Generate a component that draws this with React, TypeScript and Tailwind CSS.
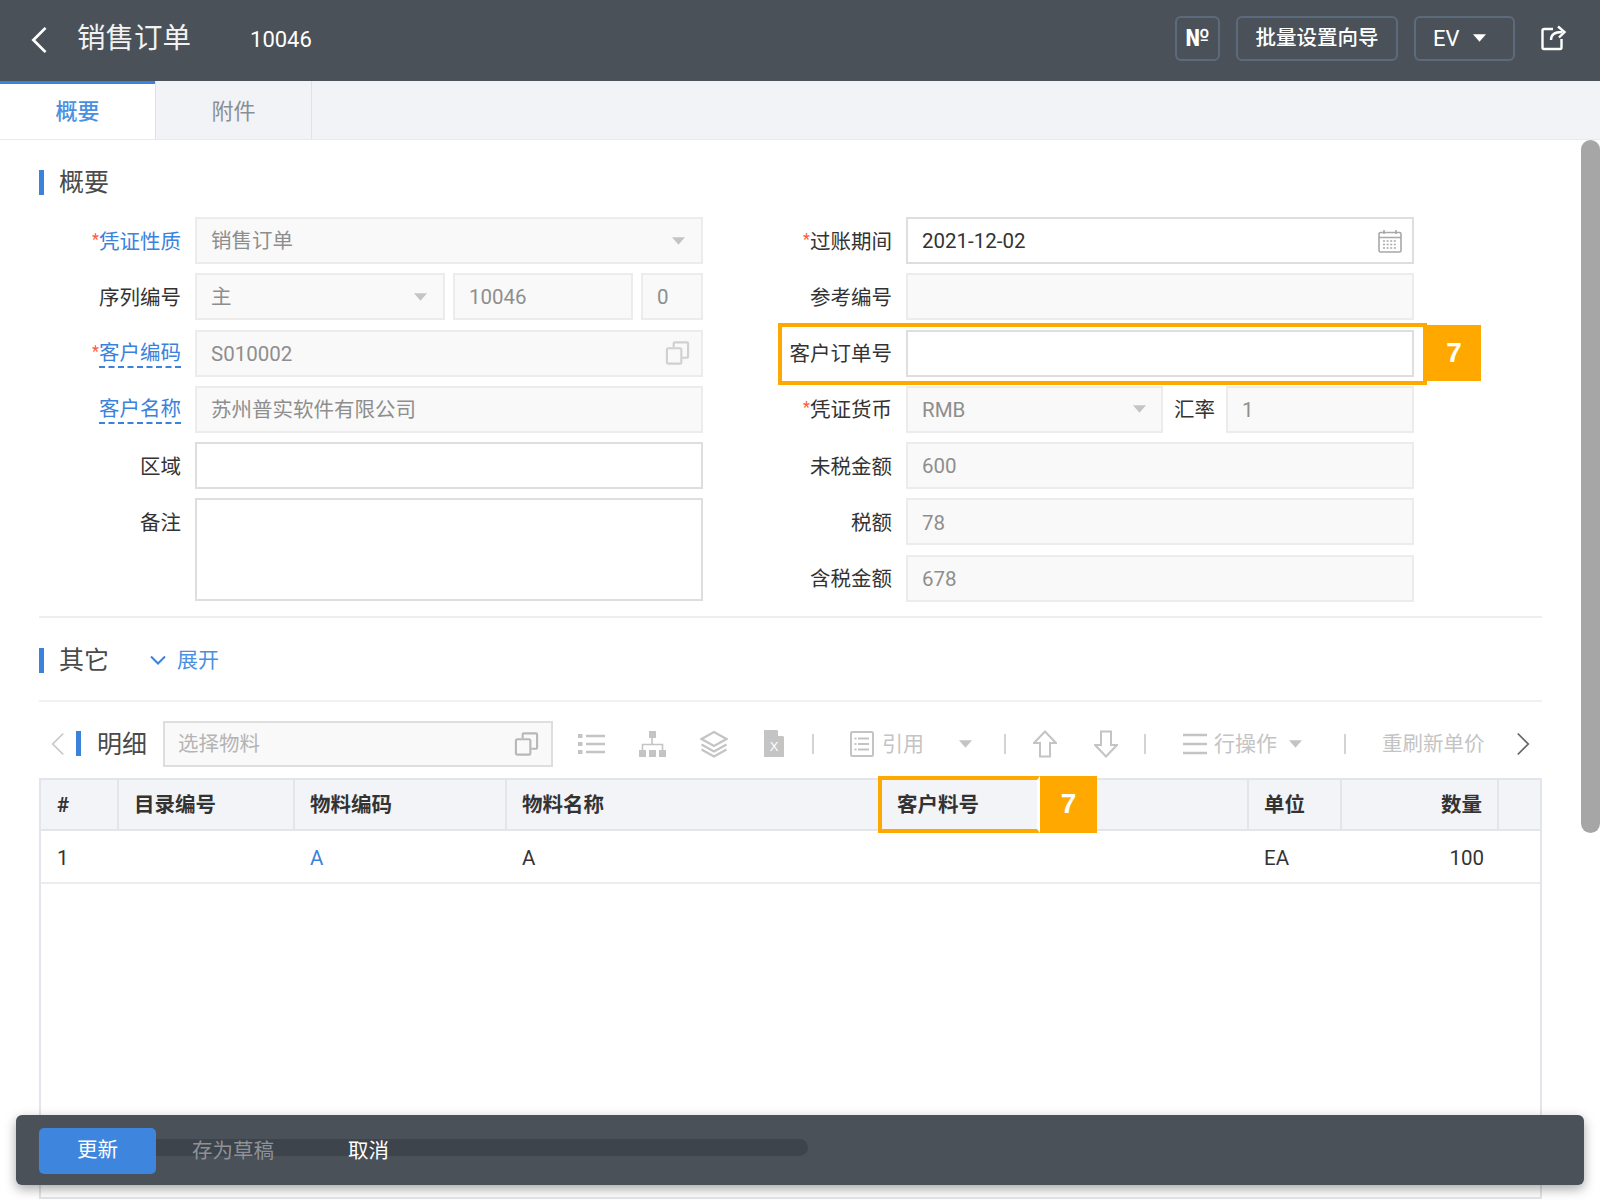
import React from "react";

const FONT = { fontFamily: '"Roboto", "Noto Sans CJK SC", sans-serif' };

function Caret({ className = "" }: { className?: string }) {
  return (
    <svg viewBox="0 0 12 7" className={`w-[13px] h-[8px] shrink-0 ${className}`} fill="currentColor">
      <path d="M0 0h12L6 7z" />
    </svg>
  );
}

function CopyIcon({ className = "" }: { className?: string }) {
  return (
    <svg viewBox="0 0 26 26" className={className} fill="none" stroke="currentColor" strokeWidth="2.2">
      <path d="M9 7V3a1 1 0 0 1 1-1h13a1 1 0 0 1 1 1v14a1 1 0 0 1-1 1h-5" />
      <rect x="2" y="8" width="15" height="16" rx="1.5" />
    </svg>
  );
}

function CalendarIcon() {
  return (
    <svg viewBox="0 0 24 24" className="w-[24px] h-[24px] text-[#a8a8a8] -mr-[4px]" fill="none" stroke="currentColor" strokeWidth="1.6">
      <rect x="1" y="3.5" width="22" height="19.5" rx="1.5" />
      <path d="M1 8.5h22M6 1v4M18 1v4" />
      <path d="M5 12h14M5 15.5h14M5 19h14" strokeDasharray="2 1.6" />
    </svg>
  );
}

function Field({ value = "", disabled = false, className = "", children }: { value?: string; disabled?: boolean; className?: string; children?: React.ReactNode }) {
  return (
    <div
      className={`flex items-center justify-between h-full min-w-0 border-2 px-[14px] text-[20.5px] ${
        disabled ? "bg-[#f9f9f9] border-[#ececec] text-[#8e8e8e]" : "bg-white border-[#dedede] text-[#333333]"
      } ${className}`}
    >
      <span className="pt-[2px]">{value}</span>
      {children}
    </div>
  );
}

function Label({ text, required, link }: { text: string; required?: boolean; link?: boolean }) {
  return (
    <div className="flex justify-end items-center h-[47px] pt-[2px] text-[20.5px] leading-[26px] text-[#333333]">
      {required && <span className="text-[#ff5a36] text-[16px] self-center -mt-1">*</span>}
      <span className={link === undefined ? "" : link ? "text-[#3b82dc] border-b-2 border-dashed border-[#3b82dc]" : "text-[#3b82dc]"}>{text}</span>
    </div>
  );
}

function Section({ title, children }: { title: string; children?: React.ReactNode }) {
  return (
    <div className="flex items-center h-[25px]">
      <div className="w-[5px] h-[25px] bg-[#3b82dc]" />
      <span className="ml-[15px] text-[25px] text-[#4a4a4a]">{title}</span>
      {children}
    </div>
  );
}

function Sep({ className = "" }: { className?: string }) {
  return <div className={`w-[2px] h-[20px] bg-[#d4d4d4] shrink-0 ${className}`} />;
}

const COLS = ["w-[78px]", "w-[176px]", "w-[212px]", "w-[372px]", "w-[162px]", "w-[208px]", "w-[93px]", "w-[157px]"];

export default function App() {
  return (
    <div style={FONT} className="relative w-[1600px] h-[1200px] overflow-hidden bg-white flex flex-col">
      {/* top bar */}
      <header className="h-[81px] shrink-0 bg-[#4a5159] flex items-center text-white">
        <svg viewBox="0 0 20 30" className="ml-[29px] -mt-[1px] w-[20px] h-[28px]" fill="none" stroke="currentColor" strokeWidth="3">
          <path d="M17 2 4 15l13 13" />
        </svg>
        <span className="ml-[28px] -mt-[3px] text-[28.5px] text-[#f2f2f2]">销售订单</span>
        <span className="ml-[59px] -mt-[3px] text-[22px]">10046</span>
        <div className="ml-auto -mt-[5px] flex items-center pr-[33px]">
          <button className="w-[45px] h-[45px] rounded-[6px] border-2 border-[#5c6b7c] text-[24px] leading-none font-bold">№</button>
          <button className="ml-[16px] w-[162px] h-[45px] rounded-[6px] border-2 border-[#5c6b7c] text-[20.5px] font-medium">批量设置向导</button>
          <button className="ml-[16px] w-[101px] h-[45px] rounded-[6px] border-2 border-[#5c6b7c] text-[22px] flex items-center pl-[17px] gap-[13px]">
            EV <Caret />
          </button>
          <svg viewBox="0 0 26 26" className="ml-[26px] w-[26px] h-[26px]" fill="none" stroke="currentColor" strokeWidth="2.4">
            <path d="M12 4H3a1.5 1.5 0 0 0-1.5 1.5v17A1.5 1.5 0 0 0 3 24h16a1.5 1.5 0 0 0 1.5-1.5V14" />
            <path d="M10 15c0-5 3.5-8 11-8" />
            <path d="M17 1.5 23.5 7 18 12.5" />
          </svg>
        </div>
      </header>

      {/* tabs */}
      <div className="h-[59px] shrink-0 bg-[#f1f3f7] flex border-b border-[#e8eaee]">
        <div className="w-[155px] bg-white border-t-[3px] border-[#3b82dc] flex items-center justify-center text-[22px] font-medium text-[#4a90e2]">概要</div>
        <div className="w-[157px] border-r border-l border-[#dfe2e8] flex items-center justify-center pt-[3px] text-[22px] text-[#8a8f96]">附件</div>
      </div>

      <main className="flex-1 min-h-0 flex flex-col pl-[39px] pr-[58px] pt-[30px]">
        <Section title="概要" />

        {/* form */}
        <div className="flex mt-[22px]">
          <div className="w-[664px] shrink-0 grid grid-cols-[142px_508px] gap-x-[14px] gap-y-[9.3px] auto-rows-[47px]">
            <Label text="凭证性质" required link={false} />
            <Field value="销售订单" disabled><Caret className="text-[#c4c4c4] mr-[2px]" /></Field>

            <Label text="序列编号" />
            <div className="flex gap-[8px] h-full">
              <Field value="主" disabled className="w-[250px]"><Caret className="text-[#c4c4c4] mr-[2px]" /></Field>
              <Field value="10046" disabled className="w-[180px]" />
              <Field value="0" disabled className="w-[62px]" />
            </div>

            <Label text="客户编码" required link />
            <Field value="S010002" disabled><CopyIcon className="w-[25px] h-[26px] text-[#d0d0d0] -mr-[3px]" /></Field>

            <Label text="客户名称" link />
            <Field value="苏州普实软件有限公司" disabled />

            <Label text="区域" />
            <Field />

            <div className="text-[20.5px] leading-[26px] text-[#333333] text-right pt-[12px]">备注</div>
            <div className="row-span-2 border-2 border-[#dedede] bg-white h-[103px]" />
          </div>

          <div className="w-[711px] shrink-0 grid grid-cols-[189px_508px] gap-x-[14px] gap-y-[9.3px] auto-rows-[47px]">
            <Label text="过账期间" required />
            <Field value="2021-12-02"><CalendarIcon /></Field>

            <Label text="参考编号" />
            <Field disabled />

            <div className="relative col-span-2 grid grid-cols-[189px_508px] gap-x-[14px] h-[47px]">
              <Label text="客户订单号" />
              <Field />
              {/* callout */}
              <div className="absolute left-[75px] -top-[7px] w-[649px] h-[62px] border-4 border-[#ffa800] pointer-events-none" />
              <div className="absolute left-[724px] -top-[5px] w-[54px] h-[56px] bg-[#ffa800] text-white text-[28px] font-bold flex items-center justify-center" style={{ fontFamily: '"Liberation Sans", sans-serif' }}>7</div>
            </div>

            <Label text="凭证货币" required />
            <div className="flex h-full">
              <Field value="RMB" disabled className="w-[257px]"><Caret className="text-[#c4c4c4] mr-[1px]" /></Field>
              <span className="w-[63px] flex items-center justify-center pt-[2px] text-[20.5px] text-[#333333]">汇率</span>
              <Field value="1" disabled className="flex-1" />
            </div>

            <Label text="未税金额" />
            <Field value="600" disabled />

            <Label text="税额" />
            <Field value="78" disabled />

            <Label text="含税金额" />
            <Field value="678" disabled />
          </div>
        </div>

        <div className="h-[2px] bg-[#eeeeee] mt-[14px]" />

        <div className="mt-[30px]">
          <Section title="其它">
            <svg viewBox="0 0 16 10" className="ml-[41px] w-[16px] h-[10px] text-[#3b82dc]" fill="none" stroke="currentColor" strokeWidth="2">
              <path d="M1 1.5 8 8.5l7-7" />
            </svg>
            <span className="ml-[11px] text-[21px] text-[#4a90e2]">展开</span>
          </Section>
        </div>

        <div className="h-[2px] bg-[#f1f1f1] mt-[27px]" />

        {/* toolbar */}
        <div className="flex items-center h-[46px] mt-[19px] text-[#c4c4c4] text-[21px]">
          <svg viewBox="0 0 16 26" className="ml-[12px] w-[14px] h-[26px] text-[#c8c8c8]" fill="none" stroke="currentColor" strokeWidth="2">
            <path d="M14 1 2 13l12 12" />
          </svg>
          <div className="ml-[11px] w-[5px] h-[25px] bg-[#3b82dc]" />
          <span className="ml-[16px] pt-[1px] text-[25px] text-[#4a4a4a]">明细</span>
          <div className="ml-[16px] w-[390px] h-[46px] flex items-center justify-between bg-[#f9f9f9] border-2 border-[#dedede] pl-[13px] pr-[12px] text-[20.5px] text-[#b4b4b4]">
            <span className="pt-[2px]">选择物料</span>
            <CopyIcon className="w-[25px] h-[26px] text-[#b8b8b8]" />
          </div>

          <svg viewBox="0 0 27 22" className="ml-[25px] w-[27px] h-[22px]" fill="none" stroke="currentColor" strokeWidth="2.4">
            <path d="M8 3h19M8 11h19M8 19h19" />
            <path d="M0 3h4.5M0 11h4.5M0 19h4.5" strokeWidth="4" />
          </svg>
          <svg viewBox="0 0 27 26" className="ml-[34px] w-[27px] h-[26px]" fill="currentColor">
            <rect x="10" y="0" width="7" height="7" />
            <rect x="0" y="19" width="7" height="7" />
            <rect x="10" y="19" width="7" height="7" />
            <rect x="20" y="19" width="7" height="7" />
            <path d="M13 7v6M3.5 19v-5.5h20V19" fill="none" stroke="currentColor" strokeWidth="1.6" />
          </svg>
          <svg viewBox="0 0 28 28" className="ml-[34px] w-[28px] h-[28px]" fill="none" stroke="currentColor" strokeWidth="2.2">
            <path d="m14 2 12.5 7L14 16 1.5 9z" />
            <path d="m1.5 14.5 12.5 7 12.5-7" />
            <path d="m1.5 19.5 12.5 7 12.5-7" />
          </svg>
          <svg viewBox="0 0 20 27" className="ml-[36px] w-[20px] h-[27px]">
            <path d="M0 0h13l7 7v20H0z" fill="currentColor" />
            <path d="M14 0.5 19.5 6H14z" fill="#ffffff" />
            <text x="10" y="21" textAnchor="middle" fontSize="13" fill="#ffffff" style={{ fontFamily: '"Liberation Sans", sans-serif' }}>X</text>
          </svg>
          <Sep className="ml-[28px]" />
          <svg viewBox="0 0 24 26" className="ml-[36px] w-[24px] h-[26px]" fill="none" stroke="currentColor" strokeWidth="2">
            <rect x="1" y="1" width="22" height="24" rx="1.5" />
            <path d="M8 7.5h11M8 13h11M8 18.5h11" />
            <path d="M4.5 7.5h2M4.5 13h2M4.5 18.5h2" />
          </svg>
          <span className="ml-[8px] pt-[2px]">引用</span>
          <Caret className="ml-[35px]" />
          <Sep className="ml-[32px]" />
          <svg viewBox="0 0 24 28" className="ml-[27px] w-[24px] h-[28px]" fill="none" stroke="currentColor" strokeWidth="2">
            <path d="M12 1.5 23 13h-6v13.5H7V13H1z" />
          </svg>
          <svg viewBox="0 0 24 28" className="ml-[37px] w-[24px] h-[28px]" fill="none" stroke="currentColor" strokeWidth="2">
            <path d="M12 26.5 23 15h-6V1.5H7V15H1z" />
          </svg>
          <Sep className="ml-[26px]" />
          <svg viewBox="0 0 24 22" className="ml-[37px] w-[24px] h-[22px]" fill="none" stroke="currentColor" strokeWidth="2.4">
            <path d="M0 2h24M0 11h24M0 20h24" />
          </svg>
          <span className="ml-[7px] pt-[2px]">行操作</span>
          <Caret className="ml-[12px]" />
          <Sep className="ml-[42px]" />
          <span className="ml-[36px] pt-[2px] text-[20.5px]">重刷新单价</span>
          <svg viewBox="0 0 16 26" className="ml-[31px] w-[14px] h-[26px] text-[#666666]" fill="none" stroke="currentColor" strokeWidth="2">
            <path d="m2 1 12 12L2 25" />
          </svg>
        </div>

        {/* table */}
        <div className="relative mt-[11px] flex-1 min-h-0 mb-[1px] border-x-2 border-b-2 border-[#e3e5ea]">
          <div className="flex h-[53px] bg-[#f2f4f8] border-y-2 border-[#e3e5ea] text-[20.5px] font-bold text-[#333333]">
            <div className={`${COLS[0]} shrink-0 border-r-2 border-[#e3e5ea] flex items-center pl-[16px] pt-[2px]`}>#</div>
            <div className={`${COLS[1]} shrink-0 border-r-2 border-[#e3e5ea] flex items-center pl-[15px] pt-[2px]`}>目录编号</div>
            <div className={`${COLS[2]} shrink-0 border-r-2 border-[#e3e5ea] flex items-center pl-[15px] pt-[2px]`}>物料编码</div>
            <div className={`${COLS[3]} shrink-0 flex items-center pl-[15px] pt-[2px]`}>物料名称</div>
            <div className={`${COLS[4]} shrink-0 flex items-center pl-[18px] pt-[2px]`}>客户料号</div>
            <div className={`${COLS[5]} shrink-0 border-r-2 border-[#e3e5ea]`} />
            <div className={`${COLS[6]} shrink-0 border-r-2 border-[#e3e5ea] flex items-center pl-[15px] pt-[2px]`}>单位</div>
            <div className={`${COLS[7]} shrink-0 border-r-2 border-[#e3e5ea] flex items-center justify-end pr-[15px] pt-[2px]`}>数量</div>
          </div>
          <div className="flex h-[53px] pt-[5px] border-b-2 border-[#ececf0] text-[20.5px] text-[#333333]">
            <div className={`${COLS[0]} shrink-0 flex items-center pl-[16px]`}>1</div>
            <div className={`${COLS[1]} shrink-0`} />
            <div className={`${COLS[2]} shrink-0 flex items-center pl-[15px] text-[#3b82dc]`}>A</div>
            <div className={`${COLS[3]} shrink-0 flex items-center pl-[15px]`}>A</div>
            <div className={`${COLS[4]} shrink-0`} />
            <div className={`${COLS[5]} shrink-0`} />
            <div className={`${COLS[6]} shrink-0 flex items-center pl-[15px]`}>EA</div>
            <div className={`${COLS[7]} shrink-0 flex items-center justify-end pr-[15px]`}>100</div>
          </div>
          {/* callout */}
          <div className="absolute left-[837px] -top-[2px] w-[162px] h-[57px] border-4 border-r-[3px] border-[#ffa800] border-r-white pointer-events-none" />
          <div className="absolute left-[999px] -top-[2px] w-[57px] h-[57px] bg-[#ffa800] text-white text-[28px] font-bold flex items-center justify-center" style={{ fontFamily: '"Liberation Sans", sans-serif' }}>7</div>
        </div>
      </main>

      {/* vertical scrollbar */}
      <div className="absolute left-[1581px] top-[140px] w-[19px] h-[693px] rounded-full bg-[#a6a6a6]" />

      {/* action bar */}
      <div className="absolute left-[16px] top-[1115px] w-[1568px] h-[70px] rounded-[6px] bg-[#4a5159] shadow-[0_4px_12px_rgba(0,0,0,0.35)] flex items-center pl-[23px] text-[20.5px]">
        <div className="absolute left-[140px] top-[24px] w-[652px] h-[17px] rounded-r-full bg-[#3e444b]" />
        <button className="relative w-[117px] h-[46px] mt-[1px] rounded-[5px] bg-[#3e86dd] text-white">更新</button>
        <span className="relative ml-[36px] mt-[2px] text-[#8e9297]">存为草稿</span>
        <span className="relative ml-[74px] mt-[2px] text-white">取消</span>
      </div>
    </div>
  );
}
